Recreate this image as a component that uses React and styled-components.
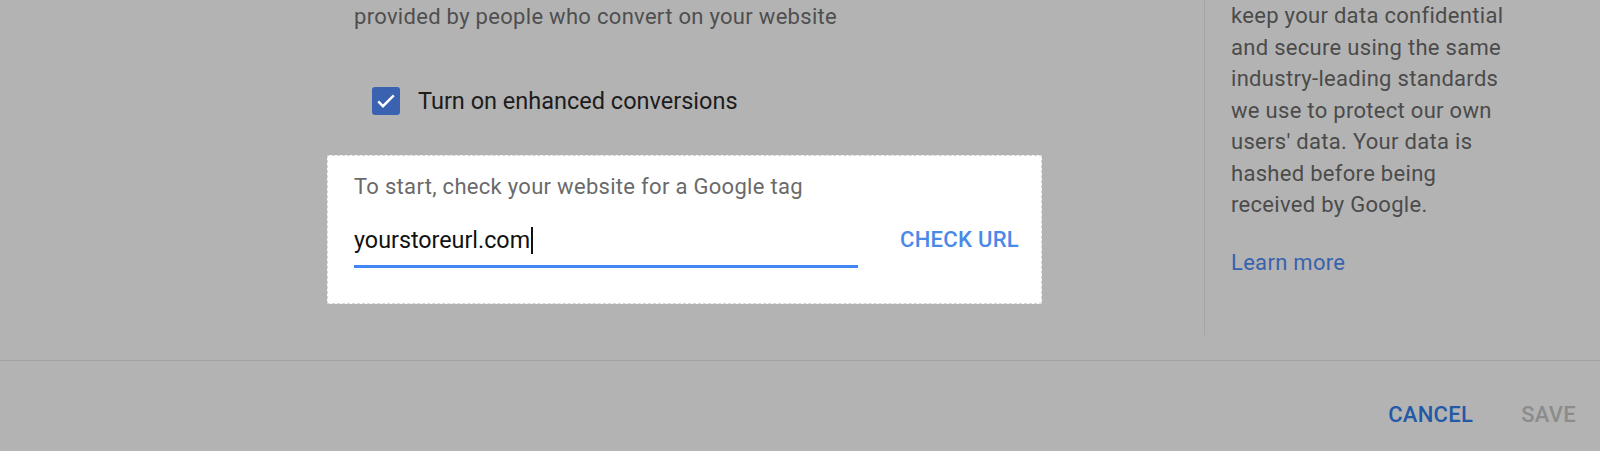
import React from "react";
import styled, { createGlobalStyle } from "styled-components";

const GlobalStyle = createGlobalStyle`
  html, body {
    margin: 0;
    padding: 0;
    background: #b3b3b3;
    font-family: Roboto, "Liberation Sans", Arial, sans-serif;
  }
`;

const Page = styled.div`
  width: 1600px;
  height: 451px;
  overflow: hidden;
  background: #b3b3b3;
  display: flex;
  flex-direction: column;
`;

const Body = styled.div`
  height: 361px;
  display: flex;
  border-bottom: 1px solid #a2a2a2;
  box-sizing: border-box;
`;

const LeftColumn = styled.div`
  width: 1204px;
  flex: none;
  padding-left: 327px;
  box-sizing: border-box;
  display: flex;
  flex-direction: column;
`;

const Intro = styled.p`
  margin: 0;
  padding: 1px 27px 0;
  font-size: 22px;
  letter-spacing: 0.3px;
  line-height: 31px;
  color: #4f4f4f;
  white-space: nowrap;
`;

const CheckRow = styled.label`
  display: flex;
  align-items: center;
  gap: 18px;
  margin-top: 55px;
  padding-left: 45px;
  font-size: 23.5px;
  color: #1c1c1c;
`;

const Box = styled.span`
  width: 28px;
  height: 28px;
  border-radius: 3px;
  background: #3a62b0;
  display: flex;
  align-items: center;
  justify-content: center;
`;

const TagCard = styled.div`
  margin-top: 40px;
  width: 715px;
  height: 149px;
  box-sizing: border-box;
  background: #ffffff;
  border: 1px dashed #d6d6d6;
  padding: 17px 22px 0 26px;
  display: flex;
  flex-direction: column;
`;

const CardLabel = styled.div`
  font-size: 22px;
  letter-spacing: 0.3px;
  line-height: 28px;
  color: #6a6a6a;
`;

const InputRow = styled.div`
  display: flex;
  align-items: flex-start;
  justify-content: space-between;
  margin-top: 25px;
`;

const Field = styled.div`
  width: 504px;
  border-bottom: 3px solid #4285f4;
  padding-bottom: 11px;
  font-size: 23.3px;
  line-height: 28px;
  color: #111;
  display: flex;
  align-items: center;
`;

const Caret = styled.span`
  display: inline-block;
  width: 1.5px;
  height: 27px;
  background: #111;
  margin-left: 1px;
`;

const TextButton = styled.button`
  border: none;
  background: transparent;
  padding: 0;
  font-family: inherit;
  font-size: 22px;
  font-weight: 500;
  line-height: 28px;
  letter-spacing: 0.3px;
  color: ${(p) => p.color};
  cursor: pointer;
`;

const RightColumn = styled.div`
  height: 335px;
  border-left: 1px solid #a4a4a4;
  padding-left: 26px;
  box-sizing: border-box;
`;

const SideText = styled.p`
  margin: 0;
  font-size: 22px;
  letter-spacing: 0.3px;
  line-height: 31.5px;
  color: #4b4b4b;
  white-space: nowrap;
`;

const LearnMore = styled.a`
  display: block;
  margin-top: 26px;
  font-size: 22px;
  letter-spacing: 0.3px;
  line-height: 31px;
  color: #3862ad;
  text-decoration: none;
`;

const Footer = styled.div`
  display: flex;
  justify-content: flex-end;
  align-items: center;
  gap: 48px;
  padding: 40px 24px 0 0;
`;

const sideLines = [
  "keep your data confidential",
  "and secure using the same",
  "industry-leading standards",
  "we use to protect our own",
  "users' data. Your data is",
  "hashed before being",
  "received by Google.",
];

export default function App() {
  return (
    <Page>
      <GlobalStyle />
      <Body>
        <LeftColumn>
          <Intro>provided by people who convert on your website</Intro>
          <CheckRow>
            <Box>
              <svg width="26" height="26" viewBox="0 0 24 24">
                <path
                  d="M4.8 12.4l4.4 4.4L19.2 6.8"
                  fill="none"
                  stroke="#fff"
                  strokeWidth="2.2"
                />
              </svg>
            </Box>
            Turn on enhanced conversions
          </CheckRow>
          <TagCard>
            <CardLabel>To start, check your website for a Google tag</CardLabel>
            <InputRow>
              <Field>
                yourstoreurl.com
                <Caret />
              </Field>
              <TextButton color="#4a89e8">CHECK URL</TextButton>
            </InputRow>
          </TagCard>
        </LeftColumn>
        <RightColumn>
          <SideText>
            {sideLines.map((l, i) => (
              <React.Fragment key={i}>
                {l}
                <br />
              </React.Fragment>
            ))}
          </SideText>
          <LearnMore href="#">Learn more</LearnMore>
        </RightColumn>
      </Body>
      <Footer>
        <TextButton color="#2459a8">CANCEL</TextButton>
        <TextButton color="#8c8c8c">SAVE</TextButton>
      </Footer>
    </Page>
  );
}
